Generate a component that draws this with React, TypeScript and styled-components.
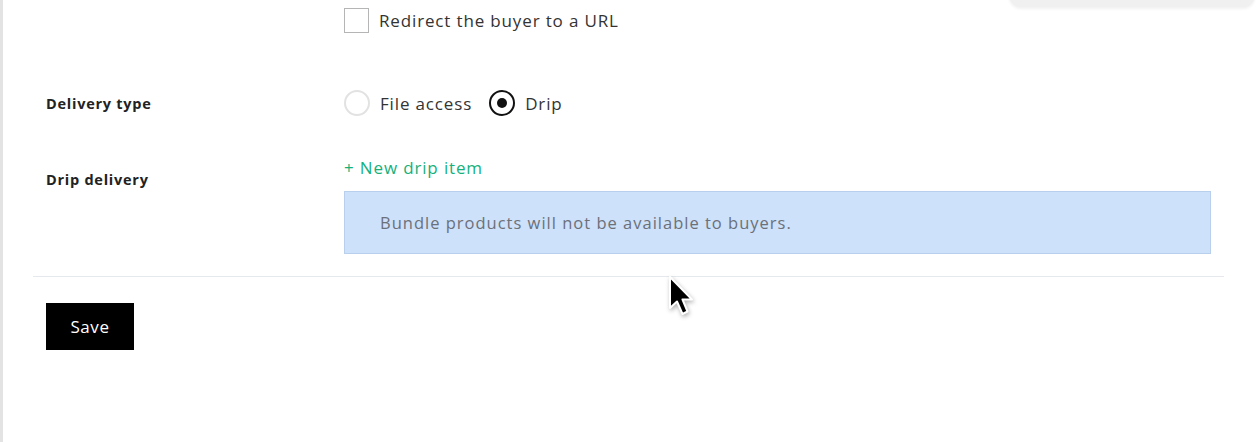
import React, { useState } from 'react';
import styled, { createGlobalStyle } from 'styled-components';

const GlobalStyle = createGlobalStyle`
  html, body {
    margin: 0;
    padding: 0;
    background: #ffffff;
    font-family: 'Open Sans', 'Liberation Sans', sans-serif;
    color: #333333;
  }
  * { box-sizing: border-box; }
`;

const Page = styled.div`
  position: relative;
  min-height: 442px;
  border-left: 3px solid #e3e3e3;
  padding: 0 32px 0 30px;
  overflow: hidden;
`;

// bottom edge of a popover that sits above the visible area
const PopoverEdge = styled.div`
  position: absolute;
  top: -40px;
  left: 1006px;
  width: 246px;
  height: 47px;
  background: #f0f0f0;
  border-radius: 0 0 12px 12px;
  box-shadow: 0 2px 3px rgba(0, 0, 0, 0.06);
`;

const Form = styled.div`
  padding: 8px 13px 0;
`;

const Row = styled.div<{ $mt?: number; $align?: string }>`
  display: grid;
  grid-template-columns: 298px 1fr;
  align-items: ${(p) => p.$align || 'center'};
  margin-top: ${(p) => p.$mt || 0}px;
`;

const Label = styled.div<{ $pt?: number }>`
  font-size: 14.5px;
  font-weight: 700;
  letter-spacing: 0.75px;
  color: #222222;
  padding-top: ${(p) => p.$pt || 0}px;
`;

const Controls = styled.div`
  display: flex;
  align-items: center;
  gap: 17px;
`;

const Option = styled.label`
  display: flex;
  align-items: center;
  gap: 10px;
  font-size: 17px;
  letter-spacing: 0.85px;
  color: #333333;
  cursor: pointer;
`;

const CheckBox = styled.span`
  width: 25px;
  height: 25px;
  border: 1px solid #b5b5b5;
  background: #fff;
`;

const Radio = styled.span<{ $checked?: boolean }>`
  width: 26px;
  height: 26px;
  border-radius: 50%;
  border: 2px solid ${(p) => (p.$checked ? '#111111' : '#e2e2e2')};
  display: flex;
  align-items: center;
  justify-content: center;
  &::after {
    content: '';
    width: 10px;
    height: 10px;
    border-radius: 50%;
    background: #111111;
    display: ${(p) => (p.$checked ? 'block' : 'none')};
  }
`;

const Column = styled.div`
  display: flex;
  flex-direction: column;
`;

const AddLink = styled.a`
  font-size: 17px;
  letter-spacing: 0.85px;
  color: #17b07b;
  line-height: 20px;
  cursor: pointer;
`;

const Notice = styled.div`
  margin-top: 13px;
  height: 63px;
  background: #cde1fb;
  border: 1px solid #b9d0ec;
  padding: 0 35px;
  display: flex;
  align-items: center;
  font-size: 16.5px;
  letter-spacing: 1px;
  color: #6b7079;
`;

const Divider = styled.hr`
  margin: 22px 0 0;
  border: none;
  border-top: 1px solid #e5e8ec;
`;

const Footer = styled.div`
  padding: 26px 13px;
`;

const SaveButton = styled.button`
  width: 88px;
  height: 47px;
  background: #000000;
  color: #ffffff;
  border: none;
  font-family: inherit;
  font-size: 17px;
  letter-spacing: 0.6px;
  cursor: pointer;
`;

const Cursor = styled.svg`
  position: absolute;
  left: 662px;
  top: 274px;
  filter: drop-shadow(1px 2px 2px rgba(0, 0, 0, 0.3));
`;

export default function App() {
  const [delivery, setDelivery] = useState<'file' | 'drip'>('drip');
  return (
    <>
      <GlobalStyle />
      <Page>
        <PopoverEdge />
        <Form>
          <Row>
            <div />
            <Controls>
              <Option>
                <CheckBox />
                Redirect the buyer to a URL
              </Option>
            </Controls>
          </Row>
          <Row $mt={57}>
            <Label>Delivery type</Label>
            <Controls>
              <Option onClick={() => setDelivery('file')}>
                <Radio $checked={delivery === 'file'} />
                File access
              </Option>
              <Option onClick={() => setDelivery('drip')}>
                <Radio $checked={delivery === 'drip'} />
                Drip
              </Option>
            </Controls>
          </Row>
          <Row $mt={42} $align="start">
            <Label $pt={12}>Drip delivery</Label>
            <Column>
              <AddLink>+ New drip item</AddLink>
              <Notice>Bundle products will not be available to buyers.</Notice>
            </Column>
          </Row>
        </Form>
        <Divider />
        <Footer>
          <SaveButton>Save</SaveButton>
        </Footer>
        <Cursor width="34" height="46" viewBox="0 0 34 46">
          <path
            d="M5 3 L5 34 L12 27.5 L17.5 40 L22.5 37.5 L17.5 25.5 L27 25.5 Z"
            fill="#000"
            stroke="#fff"
            strokeWidth="2"
            strokeLinejoin="round"
          />
        </Cursor>
      </Page>
    </>
  );
}
